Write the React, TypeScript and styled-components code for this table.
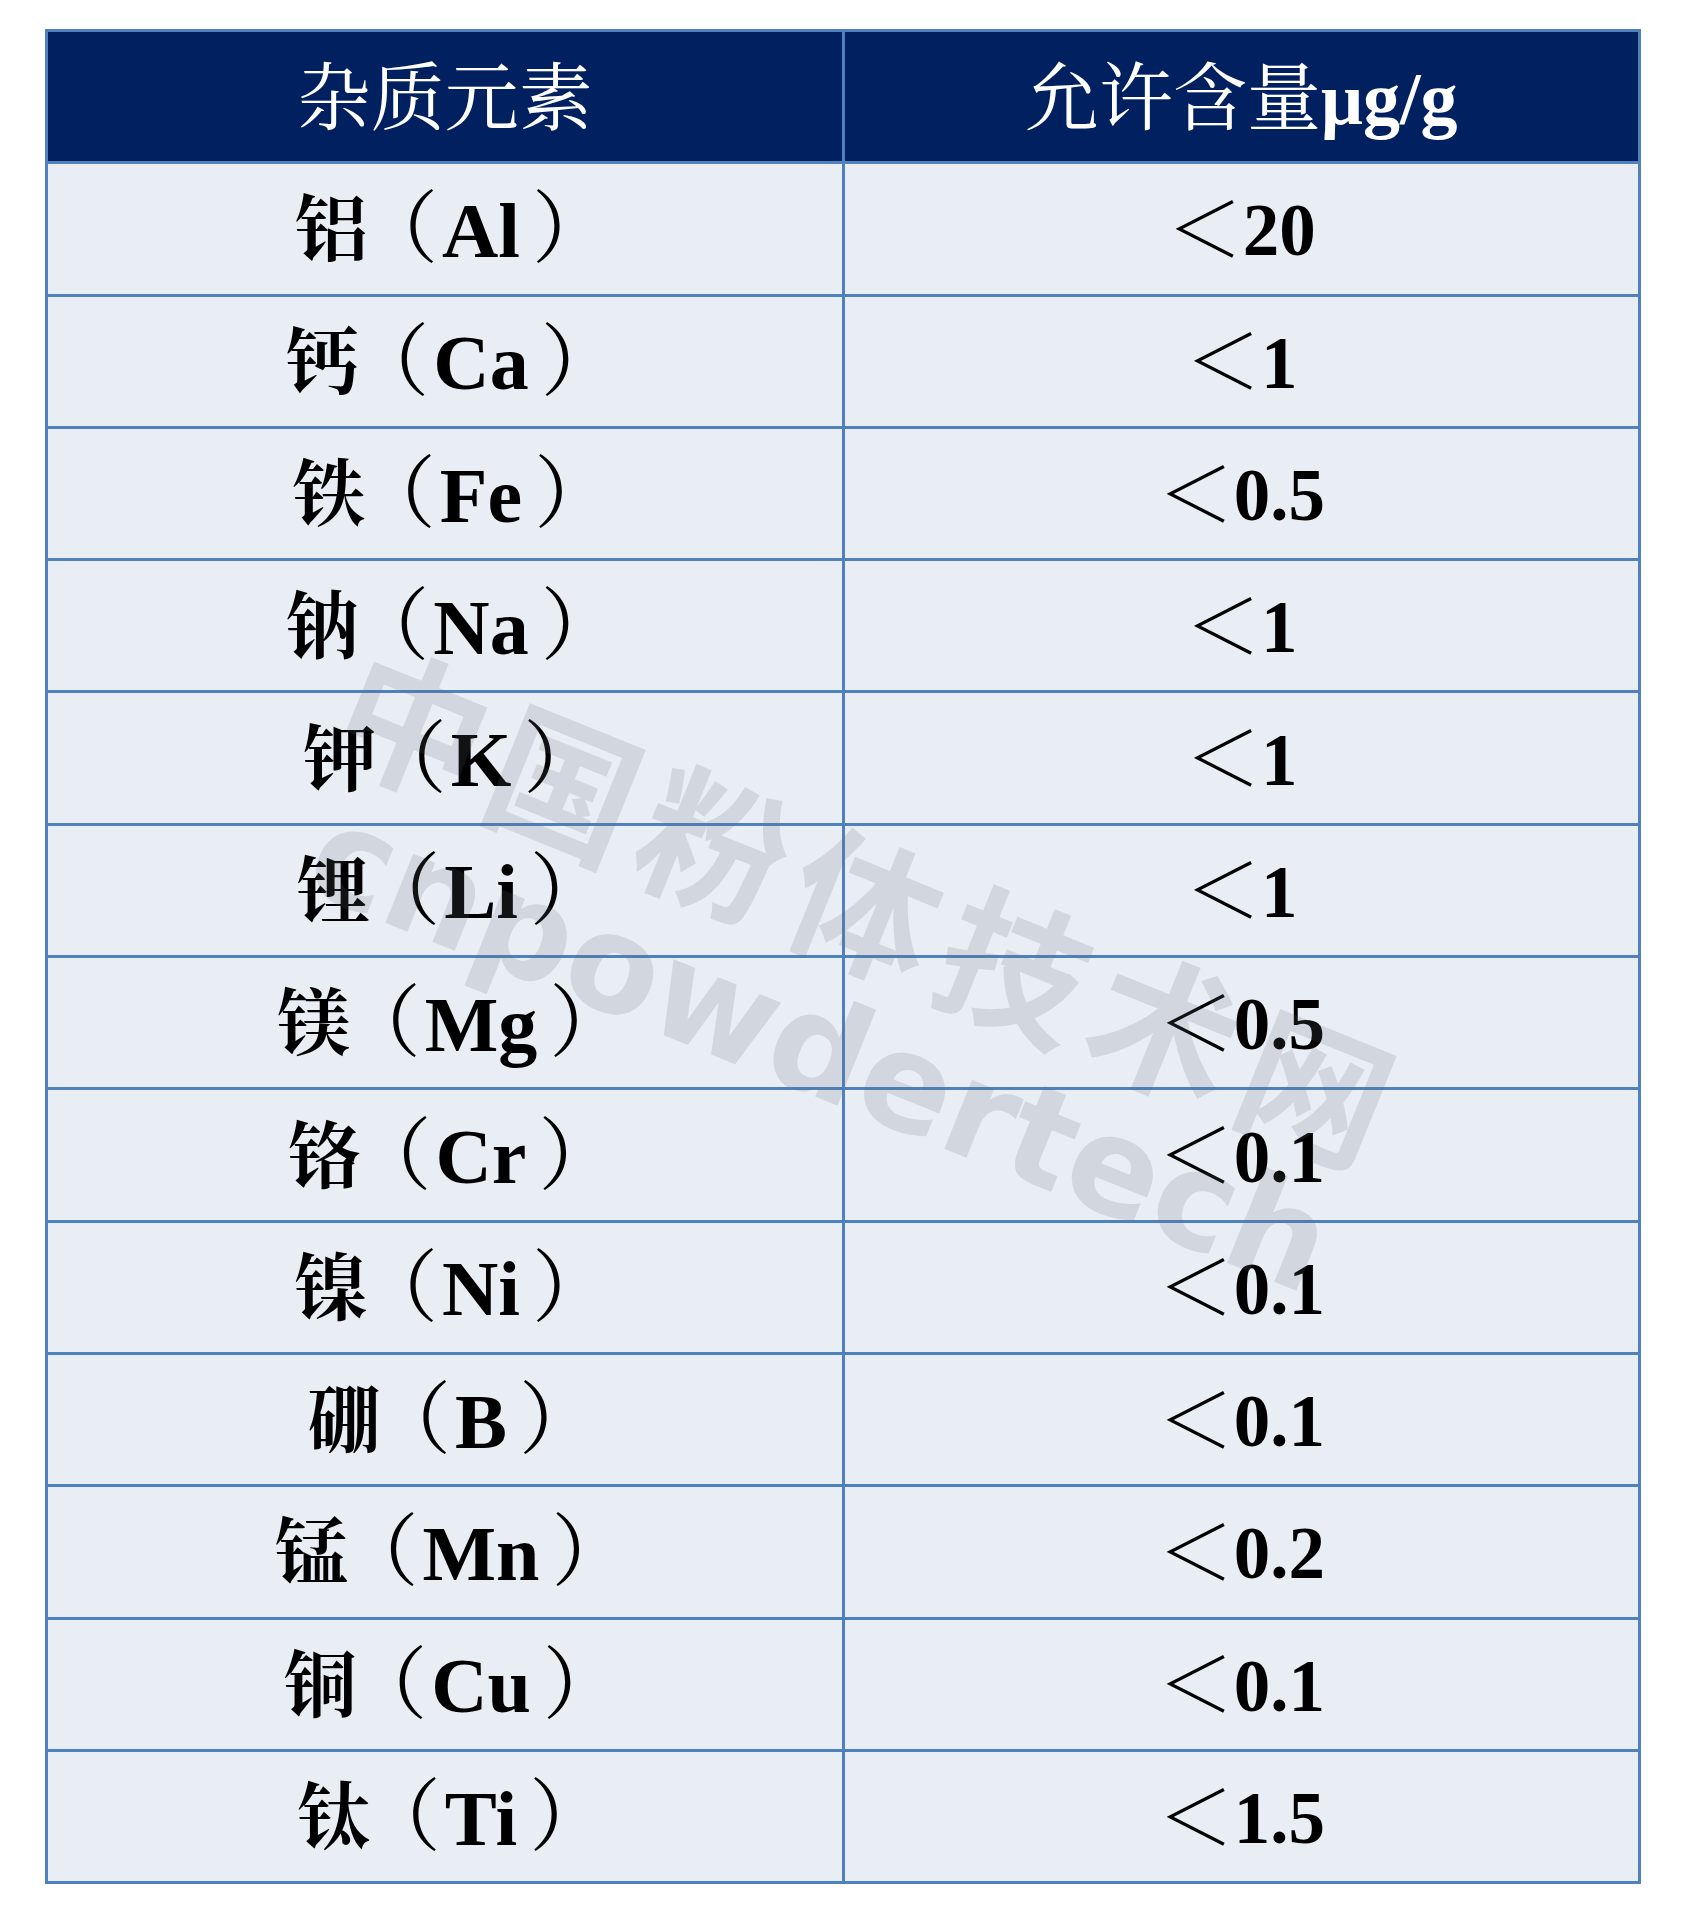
import React from "react";
import styled, { createGlobalStyle } from "styled-components";

const GlobalStyle = createGlobalStyle`
  html, body {
    margin: 0;
    padding: 0;
    background: #ffffff;
  }
`;

const Page = styled.div`
  position: relative;
  width: 1688px;
  height: 1918px;
  padding: 29px 0 0 45px;
  box-sizing: border-box;
  overflow: hidden;
`;

const Grid = styled.div`
  width: 1596px;
  box-sizing: border-box;
  display: grid;
  grid-template-columns: 1fr 1fr;
  grid-auto-rows: 129.3px;
  gap: 3px;
  padding: 3px;
  background: #4f81bd;
`;

const HeadCell = styled.div`
  background: #002060;
  color: #ffffff;
  display: flex;
  align-items: center;
  justify-content: center;
  font-family: "Liberation Serif", "Noto Serif CJK SC", "Noto Sans CJK SC", serif;
  font-size: 74px;
  font-weight: 400;
  line-height: 1;
  padding-top: 4px;
`;

const Unit = styled.span`
  font-weight: 700;
`;

const Cell = styled.div<{ $name?: boolean }>`
  background: #e9edf4;
  color: #000000;
  display: flex;
  align-items: center;
  justify-content: center;
  font-family: "Liberation Serif", "Noto Serif CJK SC", "Noto Sans CJK SC", serif;
  font-size: 73px;
  font-weight: 700;
  line-height: 1;
  padding-top: 4px;
  padding-left: ${(p) => (p.$name ? "16px" : "0")};
`;

const Symbol = styled.span`
  font-size: 78px;
`;

const OpenParen = styled.span`
  font-weight: 400;
  font-size: 79px;
  font-feature-settings: "halt" 1;
  margin-left: 31px;
  margin-right: 4px;
`;

const CloseParen = styled.span`
  font-weight: 400;
  font-size: 79px;
  margin-left: 12px;
`;

const Less = styled.span`
  font-weight: 400;
  font-size: 76px;
`;

const Watermark = styled.div`
  position: absolute;
  left: 846px;
  top: 972px;
  transform: translate(-50%, -50%) rotate(22deg);
  display: flex;
  flex-direction: column;
  align-items: center;
  pointer-events: none;
  color: rgba(100, 105, 118, 0.17);
  font-weight: 700;
  white-space: nowrap;
`;

const MarkCn = styled.div`
  font-family: "Noto Sans CJK SC", "Noto Sans", sans-serif;
  font-size: 148px;
  letter-spacing: 14px;
  line-height: 160px;
`;

const MarkEn = styled.div`
  font-family: "DejaVu Sans", "Noto Sans", sans-serif;
  font-size: 136px;
  letter-spacing: 0;
  line-height: 150px;
  margin-left: 10px;
`;

const rows: [string, string, string][] = [
  ["铝", "Al", "20"],
  ["钙", "Ca", "1"],
  ["铁", "Fe", "0.5"],
  ["钠", "Na", "1"],
  ["钾", "K", "1"],
  ["锂", "Li", "1"],
  ["镁", "Mg", "0.5"],
  ["铬", "Cr", "0.1"],
  ["镍", "Ni", "0.1"],
  ["硼", "B", "0.1"],
  ["锰", "Mn", "0.2"],
  ["铜", "Cu", "0.1"],
  ["钛", "Ti", "1.5"],
];

export default function App() {
  return (
    <>
      <GlobalStyle />
      <Page>
        <Grid>
          <HeadCell>杂质元素</HeadCell>
          <HeadCell>
            允许含量<Unit>μg/g</Unit>
          </HeadCell>
          {rows.map(([cn, sym, val]) => (
            <React.Fragment key={sym}>
              <Cell $name>
                {cn}
                <OpenParen>（</OpenParen>
                <Symbol>{sym}</Symbol>
                <CloseParen>）</CloseParen>
              </Cell>
              <Cell>
                <Less>＜</Less>
                {val}
              </Cell>
            </React.Fragment>
          ))}
        </Grid>
        <Watermark>
          <MarkCn>中国粉体技术网</MarkCn>
          <MarkEn>cnpowdertech</MarkEn>
        </Watermark>
      </Page>
    </>
  );
}
